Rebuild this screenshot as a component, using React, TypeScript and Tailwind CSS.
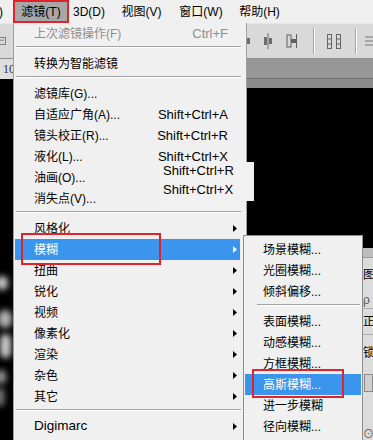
import React from "react";

const FONT = "font-['Liberation_Sans','Noto_Sans_CJK_SC',sans-serif]";

type Entry =
  | { sep: true }
  | {
      sep?: false;
      label: string;
      shortcut?: string;
      sub?: boolean;
      disabled?: boolean;
      active?: boolean;
      big?: boolean;
    };

const filterMenu: Entry[] = [
  { label: "上次滤镜操作(F)", shortcut: "Ctrl+F", disabled: true },
  { sep: true },
  { label: "转换为智能滤镜" },
  { sep: true },
  { label: "滤镜库(G)..." },
  { label: "自适应广角(A)...", shortcut: "Shift+Ctrl+A" },
  { label: "镜头校正(R)...", shortcut: "Shift+Ctrl+R" },
  { label: "液化(L)...", shortcut: "Shift+Ctrl+X" },
  { label: "油画(O)..." },
  { label: "消失点(V)..." },
  { sep: true },
  { label: "风格化", sub: true },
  { label: "模糊", sub: true, active: true },
  { label: "扭曲", sub: true },
  { label: "锐化", sub: true },
  { label: "视频", sub: true },
  { label: "像素化", sub: true },
  { label: "渲染", sub: true },
  { label: "杂色", sub: true },
  { label: "其它", sub: true },
  { sep: true },
  { label: "Digimarc", sub: true, big: true },
];

const blurMenu: Entry[] = [
  { label: "场景模糊..." },
  { label: "光圈模糊..." },
  { label: "倾斜偏移..." },
  { sep: true },
  { label: "表面模糊..." },
  { label: "动感模糊..." },
  { label: "方框模糊..." },
  { label: "高斯模糊...", active: true },
  { label: "进一步模糊" },
  { label: "径向模糊..." },
];

function Arrow() {
  return (
    <svg width="4" height="7" viewBox="0 0 4 7" className="block">
      <path d="M0 0 L4 3.5 L0 7 Z" fill="currentColor" />
    </svg>
  );
}

function MainRow({ e }: { e: Exclude<Entry, { sep: true }> }) {
  return (
    <div
      className={`ml-[1px] mr-[6px] pl-[19px] pr-[3px] h-[21px] flex items-center ${
        e.active ? "bg-[#3b95ee] text-white" : e.disabled ? "text-[#8e8e8e]" : "text-black"
      }`}
    >
      <span className={`flex-1 whitespace-nowrap ${e.big ? "text-[13.5px]" : "text-[12px]"}`}>
        {e.label}
      </span>
      {e.shortcut && <span className="text-[13px] mr-[5px] whitespace-nowrap">{e.shortcut}</span>}
      <span className="w-[4px]">{e.sub && <Arrow />}</span>
    </div>
  );
}

function Sep({ className = "" }: { className?: string }) {
  return (
    <div className={`h-[9px] pt-[2px] ${className}`}>
      <div className="border-t border-[#a3a3a3] border-b border-b-white" />
    </div>
  );
}

function ToolIcon({ kind }: { kind: number }) {
  if (kind === 0)
    return (
      <svg width="14" height="16" viewBox="0 0 14 16" className="text-[#6c6c6c]">
        <path d="M7 0v16" stroke="currentColor" />
        <rect x="3" y="4" width="3" height="8" fill="currentColor" />
        <rect x="8" y="5" width="3" height="6" fill="currentColor" />
      </svg>
    );
  if (kind === 1)
    return (
      <svg width="12" height="16" viewBox="0 0 12 16" className="text-[#6c6c6c]">
        <path d="M2 1v14M10 1v14" stroke="currentColor" />
        <rect x="3" y="5" width="6" height="6" fill="currentColor" />
      </svg>
    );
  if (kind === 2)
    return (
      <svg width="12" height="16" viewBox="0 0 12 16" className="text-[#5f5f5f]">
        <path d="M10.5 1v14" stroke="currentColor" />
        <rect x="1" y="2" width="4" height="12" fill="none" stroke="currentColor" />
        <rect x="5" y="6" width="5" height="4" fill="currentColor" />
      </svg>
    );
  return (
    <svg width="16" height="17" viewBox="0 0 16 17" className="text-[#666]">
      <rect x="1.5" y="1.5" width="4" height="14" fill="none" stroke="currentColor" />
      <rect x="10.5" y="1.5" width="4" height="14" fill="none" stroke="currentColor" />
      <path d="M1 6h5M1 11h5M10 6h5M10 11h5" stroke="currentColor" />
    </svg>
  );
}

function VSep() {
  return <div className="w-[2px] h-[26px] border-l border-[#a6a6a6] border-r border-r-white" />;
}

export default function App() {
  return (
    <div className={`relative w-[373px] h-[440px] overflow-hidden bg-black ${FONT}`}>
      {/* Menu bar */}
      <div className="h-[23px] bg-[#efefef] flex text-[12px] text-black">
        <div className="w-[14px] flex items-center -ml-[1px]">)</div>
        <div className="w-[56px] flex items-center justify-center bg-[#a7a7a7] border-2 border-[#e3232b]">
          滤镜(T)
        </div>
        <div className="w-[40px] flex items-center justify-center">3D(D)</div>
        <div className="w-[65px] flex items-center justify-center">视图(V)</div>
        <div className="w-[54px] flex items-center justify-center">窗口(W)</div>
        <div className="w-[63px] flex items-center justify-center">帮助(H)</div>
      </div>

      {/* Options bar */}
      <div className="h-[35px] bg-[#d9d9d9] border-t border-[#e6e6e6] flex items-center">
        <svg width="10" height="14" viewBox="0 0 10 14" className="text-[#6a6a6a]">
          <rect x="-4" y="2.5" width="11" height="9" fill="none" stroke="currentColor" />
          <path d="M-2 6h7" stroke="currentColor" />
        </svg>
        <div className="ml-[234px] flex items-center">
          <div className="w-[8px] overflow-hidden">
            <ToolIcon kind={1} />
          </div>
          <div className="ml-[11px]">
            <ToolIcon kind={0} />
          </div>
          <div className="ml-[11px]">
            <ToolIcon kind={2} />
          </div>
          <div className="ml-[15px]">
            <VSep />
          </div>
          <div className="ml-[11px]">
            <ToolIcon kind={3} />
          </div>
          <div className="ml-[13px]">
            <VSep />
          </div>
          <svg width="8" height="12" viewBox="0 0 8 12" className="ml-[8px] text-[#777]">
            <path d="M0 2h8M0 6h8M0 10h8" stroke="currentColor" />
          </svg>
        </div>
      </div>

      {/* Document tabs */}
      <div className="h-[30px] flex border-t border-[#8d8d8d]">
        <div className="w-[150px] flex flex-col">
          <div className="h-[20px] bg-[#dedede] flex items-center pl-[3px] text-[12px] text-[#333] font-['Liberation_Serif',serif]">
            10
          </div>
          <div className="flex-1 bg-black" />
        </div>
        <div className="flex-1 flex flex-col">
          <div className="h-[20px] bg-[#979797] border-b border-[#6f6f6f]" />
          <div className="flex-1 bg-[#8b8b8b]" />
        </div>
      </div>

      {/* Canvas + right panel */}
      <div className="flex h-[352px]">
        <div className="relative flex-1 bg-black">
          <div className="absolute left-[-4px] top-[188px] w-[12px] h-[14px] rounded-full bg-white/80 blur-[3px]" />
          <div className="absolute left-[-2px] top-[222px] w-[14px] h-[18px] rounded-full bg-white/70 blur-[3px]" />
          <div className="absolute left-[0px] top-[246px] w-[11px] h-[24px] rounded-full bg-white/80 blur-[3px]" />
          <div className="absolute left-[-4px] top-[282px] w-[10px] h-[14px] rounded-full bg-white/60 blur-[3px]" />
          <div className="absolute left-[-4px] top-[300px] w-[8px] h-[18px] rounded-full bg-white/50 blur-[3px]" />
        </div>
        <div className="w-[14px] flex flex-col">
          <div className="h-[160px] bg-black" />
          <div className="flex-1 bg-[#dcdcdc] overflow-hidden text-[12px] text-black whitespace-nowrap">
            <div className="h-[10px] bg-[#bdbdbd] border-b border-[#9a9a9a]" />
            <div className="h-[33px] flex items-center pl-[4px]">图层</div>
            <div className="h-[18px] flex items-center pl-[4px] text-[#555] border-b border-[#b0b0b0]">ρ 类型</div>
            <div className="h-[26px] flex items-center pl-[4px] border-b border-[#b0b0b0]">正常</div>
            <div className="h-[36px] flex items-center pl-[4px]">锁定:</div>
            <div className="h-[24px] flex items-center pl-[5px]">
              <div className="w-[20px] h-[18px] border border-[#8a8a8a] bg-[#cfcfcf]" />
            </div>
            <div className="h-[33px]" />
            <div className="h-[12px] flex items-center pl-[4px] text-[#555] text-[11px]">⊙ fx</div>
          </div>
        </div>
      </div>

      {/* Filter dropdown */}
      <div className="absolute left-[13px] top-[23px] w-[234px] h-[430px] bg-[#f0f0f0] border-l border-[#a0a0a0] border-r border-[#8c8c8c]">
        {filterMenu.map((e, i) =>
          e.sep ? <Sep key={i} className="ml-[2px] mr-[5px]" /> : <MainRow key={i} e={e} />
        )}
        {/* pasted shortcut patch */}
        <div className="absolute left-[144px] top-[139px] w-[96px] h-[39px] bg-[#f1f1f1] text-[13px] text-black pl-[5px]">
          <div className="h-[17px] flex items-center">Shift+Ctrl+R</div>
          <div className="h-[21px] flex items-center">Shift+Ctrl+X</div>
        </div>
      </div>

      {/* Blur submenu */}
      <div className="absolute left-[243px] top-[235px] w-[120px] h-[215px] bg-[#f0f0f0] border border-[#8f8f8f] pt-[3px]">
        {blurMenu.map((e, i) =>
          e.sep ? (
            <Sep key={i} className="ml-[13px] mr-[2px]" />
          ) : (
            <div
              key={i}
              className={`mx-[1px] pl-[18px] h-[21px] flex items-center text-[12px] whitespace-nowrap ${
                e.active ? "bg-[#3b95ee] text-white" : "text-black"
              }`}
            >
              {e.label}
            </div>
          )
        )}
      </div>

      {/* annotation boxes */}
      <div className="absolute left-[21px] top-[233px] w-[140px] h-[32px] border-2 border-[#e3232b]" />
      <div className="absolute left-[252px] top-[369px] w-[92px] h-[29px] border-2 border-[#e3232b]" />
    </div>
  );
}
